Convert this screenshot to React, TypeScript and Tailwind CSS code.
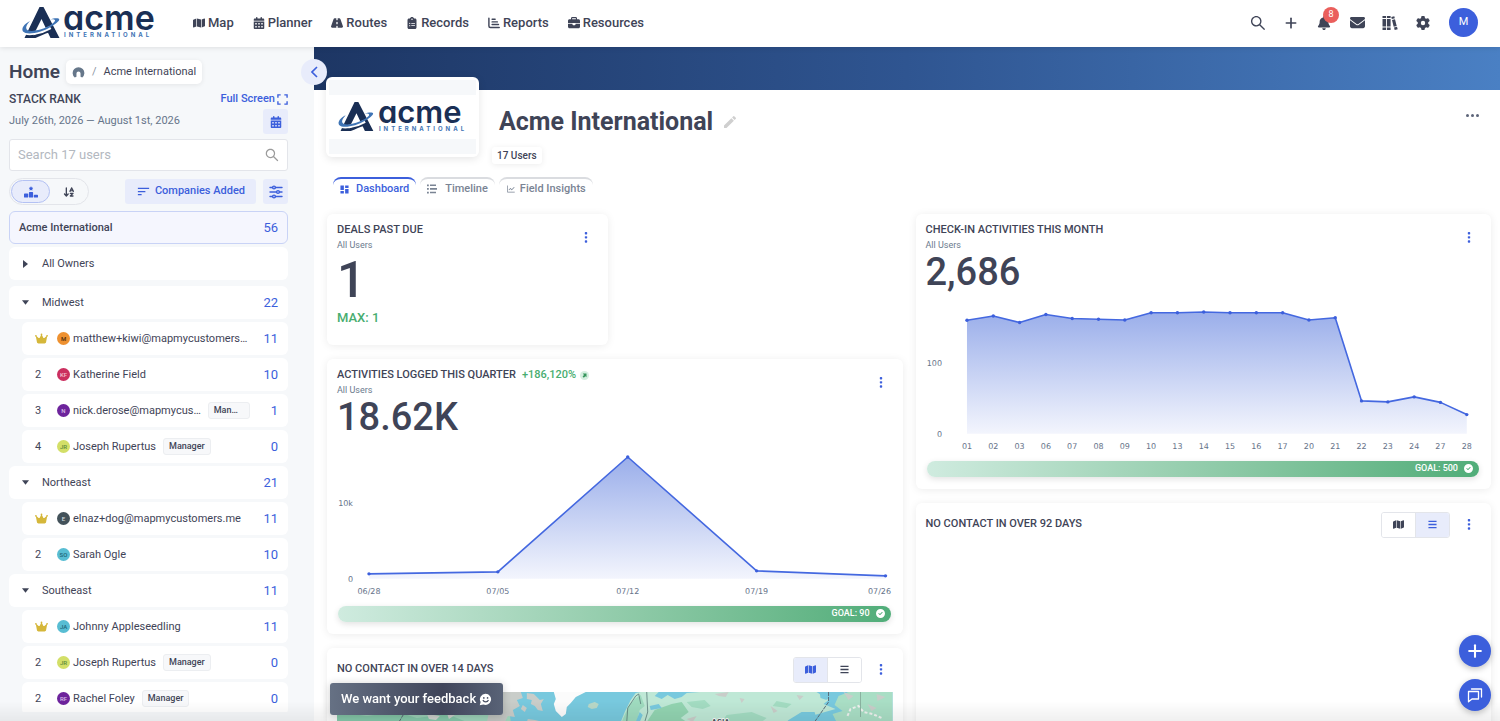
import type { ReactNode } from 'react'
import {
  FaArrowDownAZ,
  FaBell,
  FaBriefcase,
  FaCalendarDays,
  FaChartBar,
  FaCircleCheck,
  FaClipboardList,
  FaCrown,
  FaEnvelope,
  FaGear,
  FaMap,
  FaRankingStar,
  FaRoad,
} from 'react-icons/fa6'
import { AiOutlineLineChart, AiOutlineSearch } from 'react-icons/ai'
import { LuPlus } from 'react-icons/lu'
import { MdEdit, MdSort } from 'react-icons/md'

interface Member {
  rank: number
  name: string
  initials: string
  avatar: string
  count: number
  role?: string
}

interface Team {
  name: string
  count: number
  members: Member[]
}

interface Point {
  x: number
  y: number
  label: string
}

const navItems = [
  { label: 'Map', icon: <FaMap /> },
  { label: 'Planner', icon: <FaCalendarDays /> },
  { label: 'Routes', icon: <FaRoad /> },
  { label: 'Records', icon: <FaClipboardList /> },
  { label: 'Reports', icon: <ReportsIcon /> },
  { label: 'Resources', icon: <FaBriefcase /> },
]

const teams: Team[] = [
  {
    name: 'Midwest',
    count: 22,
    members: [
      { rank: 1, name: 'matthew+kiwi@mapmycustomers…', initials: 'M', avatar: 'bg-[#ee9130] text-[#4a2c0c]', count: 11 },
      { rank: 2, name: 'Katherine Field', initials: 'KF', avatar: 'bg-[#cb2f5f] text-[#f3c3d1]', count: 10 },
      { rank: 3, name: 'nick.derose@mapmycus…', initials: 'N', avatar: 'bg-[#6d249c] text-[#d9bfe9]', count: 1, role: 'Man…' },
      { rank: 4, name: 'Joseph Rupertus', initials: 'JR', avatar: 'bg-[#d3df68] text-[#5d8a3c]', count: 0, role: 'Manager' },
    ],
  },
  {
    name: 'Northeast',
    count: 21,
    members: [
      { rank: 1, name: 'elnaz+dog@mapmycustomers.me', initials: 'E', avatar: 'bg-[#43525a] text-[#d5dcdf]', count: 11 },
      { rank: 2, name: 'Sarah Ogle', initials: 'SO', avatar: 'bg-[#58bdd3] text-[#1f6678]', count: 10 },
    ],
  },
  {
    name: 'Southeast',
    count: 11,
    members: [
      { rank: 1, name: 'Johnny Appleseedling', initials: 'JA', avatar: 'bg-[#58bdd3] text-[#1f6678]', count: 11 },
      { rank: 2, name: 'Joseph Rupertus', initials: 'JR', avatar: 'bg-[#d3df68] text-[#5d8a3c]', count: 0, role: 'Manager' },
      { rank: 2, name: 'Rachel Foley', initials: 'RF', avatar: 'bg-[#6d249c] text-[#d9bfe9]', count: 0, role: 'Manager' },
    ],
  },
]

const quarterPoints: Point[] = [
  { x: 32, y: 137, label: '06/28' },
  { x: 161, y: 135, label: '07/05' },
  { x: 291, y: 20, label: '07/12' },
  { x: 420, y: 134, label: '07/19' },
  { x: 549, y: 139, label: '07/26' },
]

const monthDays = ['01', '02', '03', '06', '07', '08', '09', '10', '13', '14', '15', '16', '17', '20', '21', '22', '23', '24', '27', '28']
const monthHeights = [28.3, 24, 30.6, 22.5, 26.5, 27.3, 28, 20.7, 20.7, 20, 20.7, 20.7, 20.7, 28, 25.8, 109, 110, 105, 110.5, 122.7]
const monthPoints: Point[] = monthDays.map((label, i) => ({ label, x: 41 + i * 26.33, y: monthHeights[i] }))

function ReportsIcon() {
  return (
    <svg viewBox="0 0 16 16" fill="none" stroke="currentColor" strokeWidth="1.900" strokeLinecap="round" strokeLinejoin="round" aria-hidden="true">
      <path d="M1.200 1.500v10.500a2 2 0 0 0 2 2H15M5.500 3h4M5.500 6.500h7M5.500 10h8.500" />
    </svg>
  )
}

function LogoMark({ className }: { className: string }) {
  return (
    <svg viewBox="0 0 38 32" className={className} aria-hidden="true">
      <path d="M17.500 0H21.500L37.500 31H28.500L19.500 12 10 31H2.500Z" fill="#1a2f55" />
      <path d="M9 29C15 27 20 24.500 24 21L27 25.500C23 26.500 18 29 13.500 31H8Z" fill="#1a2f55" />
      <path d="M8 14C2 17-1 21.500 1.200 24.500 4.500 28.500 19 26 28.500 20.500" fill="none" stroke="#fff" strokeWidth="3.500" />
      <path d="M8 14C2 17-1 21.500 1 24.500 4.500 28.500 19 26 28.500 20 35 16 39 12.500 36.500 11.500 34.500 10.800 31 11.500 28 12.300 33 12 34.500 13 31.500 15.800 27 19.800 18 23.500 10 24 4 24.200 1.500 21 8 14Z" fill="#3f74b5" />
    </svg>
  )
}

function Logo({ small }: { small?: boolean }) {
  return (
    <span className={small ? 'flex items-center gap-1' : 'flex items-center gap-[3px]'}>
      <LogoMark className={small ? 'h-[30px] w-[36px]' : 'h-[32px] w-[38px]'} />
      <span className="flex flex-col font-['Inter']">
        <span
          className={
            small
              ? "text-[31px] leading-[24px] font-semibold text-[#1a2f55] [font-feature-settings:'cv11']"
              : "text-[34px] leading-[25px] font-semibold text-[#1a2f55] [font-feature-settings:'cv11']"
          }
        >
          acme
        </span>
        <span className="pl-px text-[6px] leading-[10px] font-bold tracking-[3px] text-[#3f74b5]">INTERNATIONAL</span>
      </span>
    </span>
  )
}

function BooksIcon() {
  return (
    <svg viewBox="0 0 16 16" className="size-4" fill="currentColor" aria-hidden="true">
      <path d="M.5 1h3.600v2H.500zM.500 4h3.600v7.500H.500zM.500 12.500h3.600v2.500H.500zM5 1h3.600v2H5zM5 4h3.600v7.500H5zM5 12.500h3.600v2.500H5z" />
      <path d="m9.300 2 3-.8.500 2-3 .8zM10 5l3-.8 1.700 6.700-3 .8zM12 12.600l3-.8.700 2.400-3 .8z" />
    </svg>
  )
}

function TuneIcon() {
  return (
    <svg viewBox="0 0 14 14" className="size-[14px]" fill="none" stroke="currentColor" strokeWidth="1.400" strokeLinecap="round" aria-hidden="true">
      <path d="M1 2.500h2.500M6.500 2.500H13M1 7h6.500M10.500 7H13M1 11.500h2.500M6.500 11.500H13" />
      <circle cx="5" cy="2.500" r="1.400" />
      <circle cx="9" cy="7" r="1.400" />
      <circle cx="5" cy="11.500" r="1.400" />
    </svg>
  )
}

function DashboardIcon() {
  return (
    <svg viewBox="0 0 10 10" className="size-[9px]" fill="currentColor" aria-hidden="true">
      <path d="M.5.5h3.800v5H.500zM.500 6.800h3.800v2.700H.500zM5.700.500h3.800v2.700H5.700zM5.700 4.500h3.800v5H5.700z" />
    </svg>
  )
}

function TimelineIcon() {
  return (
    <svg viewBox="0 0 10 10" className="size-[10px]" fill="currentColor" aria-hidden="true">
      <path d="M0 .5h1.800v1.700H0zM0 4.100h1.800v1.700H0zM0 7.700h1.800v1.700H0zM3 .5h6v1.600H3zM3 4.100h7v1.600H3zM3 7.700h6v1.600H3z" />
    </svg>
  )
}

function SmileChatIcon() {
  return (
    <svg viewBox="0 0 14 14" className="size-[13px]" aria-hidden="true">
      <path d="M7.200.800a6 6 0 1 1-2.600 11.500L.800 13.200l1-3.400A6 6 0 0 1 7.200.800Z" fill="#fff" />
      <circle cx="5.200" cy="5.300" r=".9" fill="#4a5064" />
      <circle cx="9.200" cy="5.300" r=".9" fill="#4a5064" />
      <path d="M4.200 7.600a3.200 3 0 0 0 6 0" fill="none" stroke="#4a5064" strokeWidth="1.200" />
    </svg>
  )
}

function ChatIcon() {
  return (
    <svg viewBox="0 0 16 16" className="size-4" fill="none" stroke="currentColor" strokeWidth="1.300" strokeLinejoin="round" aria-hidden="true">
      <path d="M1.500 4.500h10v7.500H5l-3.500 2.800Z" />
      <path d="M4.500 2h10v8" strokeLinecap="round" />
    </svg>
  )
}

function KebabIcon() {
  return (
    <svg viewBox="0 0 4 12" className="h-[11px] w-1" fill="currentColor" aria-hidden="true">
      <rect x=".7" y="0" width="2.600" height="2.600" rx=".8" />
      <rect x=".7" y="4.500" width="2.600" height="2.600" rx=".8" />
      <rect x=".7" y="9" width="2.600" height="2.600" rx=".8" />
    </svg>
  )
}

function LinesIcon() {
  return (
    <svg viewBox="0 0 10 10" className="size-[9px]" stroke="currentColor" strokeWidth="1.500" aria-hidden="true">
      <path d="M.5 1.500h9M.5 5h9M.5 8.500h9" />
    </svg>
  )
}

function KebabButton() {
  return (
    <button type="button" aria-label="Card options" className="flex size-6 shrink-0 items-center justify-center text-[#3c5fdc]">
      <KebabIcon />
    </button>
  )
}

function Card({ children, className = '' }: { children: ReactNode; className?: string }) {
  return (
    <section className={`rounded-md bg-white px-[10px] pt-[9px] shadow-[0_1px_8px_rgba(0,0,0,0.08)] ${className}`}>
      {children}
    </section>
  )
}

function CardTitle({ title, extra }: { title: string; extra?: ReactNode }) {
  return (
    <div className="flex items-start justify-between">
      <div>
        <div className="flex items-center gap-[6px]">
          <h2 className="text-[11px] leading-[14px] font-medium">{title}</h2>
          {extra}
        </div>
        <p className="text-[9px] leading-4 text-[#6b7a8d]">All Users</p>
      </div>
      <div className="pt-[2px]">
        <KebabButton />
      </div>
    </div>
  )
}

function AreaChart({ id, points, tick, tickY }: { id: string; points: Point[]; tick: string; tickY: number }) {
  const line = points.map((p) => `${p.x},${p.y}`).join(' ')
  const first = points[0]
  const last = points[points.length - 1]

  return (
    <svg viewBox="0 0 556 162" className="mt-px block w-full font-['DejaVu_Sans']" role="img" aria-label={id}>
      <defs>
        <linearGradient id={id} x1="0" y1="0" x2="0" y2="1">
          <stop offset="0" stopColor="#9aaeea" />
          <stop offset="1" stopColor="#f3f5fd" />
        </linearGradient>
      </defs>
      <polygon points={`${first.x},142 ${line} ${last.x},142`} fill={`url(#${id})`} />
      <polyline points={line} fill="none" stroke="#4468e0" strokeWidth="1.600" strokeLinejoin="round" />
      {points.map((p) => (
        <circle key={p.label} cx={p.x} cy={p.y} r="1.700" fill="#3c5fdc" />
      ))}
      <g fontSize="8" fill="#66738a">
        <text x="16" y={tickY} textAnchor="end">{tick}</text>
        <text x="16" y="145" textAnchor="end">0</text>
        {points.map((p) => (
          <text key={p.label} x={Math.min(p.x, 543)} y="157" textAnchor="middle">{p.label}</text>
        ))}
      </g>
    </svg>
  )
}

function GoalBar({ goal }: { goal: number }) {
  return (
    <div className="mt-[7px] mr-[2px] mb-3 ml-px flex h-4 items-center justify-end gap-[6px] rounded-full bg-linear-to-r from-[#cfebdf] to-[#50ad79] px-[6px] text-[9px] font-medium text-white shadow-[0_2px_6px_rgba(0,0,0,0.12)]">
      GOAL: {goal}
      <FaCircleCheck className="size-[9px]" />
    </div>
  )
}

function ViewSwitch({ active }: { active: 'map' | 'list' }) {
  const on = 'bg-[#e8ecfb] text-[#3c5fdc]'
  const off = 'bg-white text-[#3f4457]'
  return (
    <div className="flex h-[26px] w-[69px] overflow-hidden rounded-[3px] border border-[#e3e5ea]">
      <button type="button" aria-label="Map view" className={`flex flex-1 items-center justify-center text-[11px] ${active === 'map' ? on : off}`}>
        <FaMap />
      </button>
      <button type="button" aria-label="List view" className={`flex flex-1 items-center justify-center border-l border-[#e3e5ea] ${active === 'list' ? on : off}`}>
        <LinesIcon />
      </button>
    </div>
  )
}

function ContactHeader({ title, active }: { title: string; active: 'map' | 'list' }) {
  return (
    <div className="flex h-[26px] items-center">
      <h2 className="flex-1 pb-[2px] text-[11px] leading-[14px] font-medium">{title}</h2>
      <ViewSwitch active={active} />
      <div className="ml-[7px]">
        <KebabButton />
      </div>
    </div>
  )
}

function WorldMap() {
  return (
    <svg viewBox="0 0 556 160" className="block w-full" role="img" aria-label="Map">
      <rect width="556" height="160" fill="#78c9de" />
      <path d="M0 0H182L176 5 180 12 172 17 174 30 160 60 120 110H60L20 60H0Z" fill="#a5dcc2" />
      <path d="M163 0H184L186 6 180 8 183 14 176 18 178 25 171 24 168 30H150L155 8Z" fill="#c9cdc9" />
      <path d="M190 1 197 2 203 8 207 7 204 12 206 19 201 18 198 14 194 12 195 8 190 7ZM191 27 198 28 206 30H190Z" fill="#c9cdc9" />
      <path d="M186 13 190 16 188 20 184 17Z" fill="#c9cdc9" />
      <path d="M0 20 30 24 60 20 80 26 110 22 130 30H0Z" fill="#8bcfb0" />
      <path d="M90 22 103 24 99 28 92 27ZM110 21 118 23 112 27Z" fill="#d7dbd6" />
      <path d="M217 0H249L239 5 234 11 230 15 229 22 225 25 219 19 217 12 219 7Z" fill="#fbfbfb" />
      <path d="M252 12 258 10 262 12 260 16 255 17 251 15Z" fill="#b9d8c7" />
      <path d="M284 30 288 20 294 8 299 1 304 0H322L318 4 325 7 331 3 338 7 345 5 350 1 363 0H480L492 8 487 12 499 17 478 23 470 30 465 80 440 120H300L290 60Z" fill="#bfe8d6" />
      <path d="M287 25 292 14 298 7 304 3 308 14 303 18 300 30H285Z" fill="#9fdbbf" />
      <path d="M310 30 318 18 335 12 345 10 352 20 344 26 350 30Z" fill="#92d4b1" />
      <path d="M350 10 368 8 374 14 366 17 355 15ZM390 23 415 20 430 26 425 30H385ZM440 9 455 12 450 16 436 14Z" fill="#a3dcc2" />
      <path d="M299 30 303 20 306 23 303 30ZM313 14 322 12 325 16 314 18Z" fill="#78c9de" />
      <path d="M378 2 392 0 389 5 382 4ZM434 14 441 19 437 21ZM403 6 408 7 405 11ZM460 3 467 4 463 8ZM350 27 360 24 356 30Z" fill="#c9cdc9" />
      <path d="M483 0 492 2 490 8 484 6ZM452 28 465 20 478 20 481 30H450Z" fill="#78c9de" />
      <path d="M502 4 512 0H556V80L540 100 530 60 525 30H500L496 22 506 19 498 13Z" fill="#a9dec5" />
      <path d="M507 0 517 4 512 8ZM540 2 549 5 541 9ZM531 12 540 16 535 19Z" fill="#c9cdc9" />
      <path d="M511 24 514 17 522 14 527 20 536 22 545 26" fill="none" stroke="#eef1ee" strokeWidth="2" strokeDasharray="3 2" />
      <path d="M290 30 291 16 299 4 302 2 304 12M310 0 311 20 308 30" fill="none" stroke="#5b7a78" strokeWidth=".8" />
      <path d="M492 0V10L478 30M62 30 68 20" fill="none" stroke="#5a6c78" strokeWidth="1" strokeDasharray="4 1" />
      <path d="M524 0V25" stroke="#83a797" strokeWidth=".8" />
      <text x="384" y="32" textAnchor="middle" fontSize="8" fontWeight="700" fill="#4a545c" stroke="#fff" strokeWidth="1.500" paintOrder="stroke">ASIA</text>
    </svg>
  )
}

function MemberRow({ member }: { member: Member }) {
  return (
    <li className="ml-[13px] flex h-[33px] items-center rounded-md bg-white pr-[10px] pl-[13px]">
      <span className="w-[22px] shrink-0 text-[11px] leading-[18px]">
        {member.rank === 1 ? <FaCrown className="size-[13px] text-[#d5b73a]" aria-label="1" /> : member.rank}
      </span>
      <span className={`flex size-[13px] shrink-0 items-center justify-center rounded-full text-[6px] font-medium ${member.avatar}`}>
        {member.initials}
      </span>
      <a href="#member" className="ml-[3px] text-[11px] leading-[18px] whitespace-nowrap">{member.name}</a>
      {member.role && (
        <span className="ml-[7px] min-w-[42px] rounded-[3px] border border-[#eceef1] bg-[#f7f8fa] px-[5px] text-[9px] leading-[15px] font-medium">
          {member.role}
        </span>
      )}
      <span className="ml-auto shrink-0 text-right text-[13px] text-[#3c5fdc]">{member.count}</span>
    </li>
  )
}

function Sidebar() {
  return (
    <aside className="relative flex w-[314px] shrink-0 flex-col bg-[#f6f8fa] pt-[13px] pr-[26px] pb-[9px] pl-[9px]">
      <div className="flex h-6 items-center gap-[6px]">
        <h1 className="text-[19px] font-semibold">Home</h1>
        <nav aria-label="Breadcrumb" className="flex h-6 items-center gap-[7px] rounded-[5px] bg-white px-[6px] text-[11px] shadow-[0_1px_5px_rgba(0,0,0,0.08)]">
          <a href="#home" aria-label="Home">
            <svg viewBox="0 0 14 14" className="size-[13px]" aria-hidden="true">
              <path d="M3 12.500A6.300 6.300 0 1 1 11 12.500L9.200 11.500V8a2.200 2.200 0 0 0-4.400 0v3.500Z" fill="#66778a" />
            </svg>
          </a>
          <span className="text-[#8a94a3]">/</span>
          <a href="#acme">Acme International</a>
        </nav>
      </div>

      <div className="mt-[7px] flex h-4 items-center justify-between">
        <h2 className="text-xs font-medium">STACK RANK</h2>
        <button type="button" className="flex items-center gap-[2px] text-[11px] font-medium text-[#3c5fdc]">
          Full Screen
          <svg viewBox="0 0 12 12" className="size-[11px]" fill="none" stroke="currentColor" strokeWidth="1.500" aria-hidden="true">
            <path d="M1 4V1h3M8 1h3v3M11 8v3H8M4 11H1V8" />
          </svg>
        </button>
      </div>

      <div className="mt-[2px] flex h-[25px] items-center justify-between">
        <span className="text-[11px] text-[#66758a]">July 26th, 2026 — August 1st, 2026</span>
        <button type="button" aria-label="Pick dates" className="flex size-[25px] items-center justify-center rounded-[3px] bg-[#e8ecfb] text-xs text-[#3c5fdc]">
          <FaCalendarDays />
        </button>
      </div>

      <label className="mt-[5px] flex h-8 shrink-0 items-center rounded-[3px] border border-[#e3e5ea] bg-white px-[7px]">
        <input type="search" aria-label="Search users" placeholder="Search 17 users" className="min-w-0 flex-1 pl-px text-[13px] outline-none placeholder:text-[#b3b8bf]" />
        <AiOutlineSearch className="size-4 text-[#9b9b9b]" />
      </label>

      <div className="mt-[7px] flex h-[27px] shrink-0 items-center">
        <div className="flex h-[27px] w-20 items-center rounded-full border border-[#e3e5ea] p-px">
          <button type="button" aria-label="Rank order" className="flex h-full flex-1 items-center justify-center rounded-full border border-[#b3c1f3] bg-[#e8ecfb] text-sm text-[#3c5fdc]">
            <FaRankingStar />
          </button>
          <button type="button" aria-label="Alphabetical order" className="flex h-full flex-1 items-center justify-center text-xs">
            <FaArrowDownAZ />
          </button>
        </div>
        <button type="button" className="ml-auto flex h-[25px] w-[131px] items-center justify-center gap-1 rounded-[3px] bg-[#e8ecfb] text-[11px] font-medium text-[#3c5fdc]">
          <MdSort className="size-[15px]" />
          Companies Added
        </button>
        <button type="button" aria-label="Filters" className="ml-[7px] flex size-[25px] items-center justify-center rounded-[3px] bg-[#e8ecfb] text-[#3c5fdc]">
          <TuneIcon />
        </button>
      </div>

      <ul className="mt-[6px] flex min-h-0 flex-1 flex-col gap-[3px] overflow-hidden *:shrink-0">
        <li className="flex h-[33px] items-center justify-between rounded-md border border-[#c9d3f6] bg-[#f5f6fe] px-[9px] text-[11px] leading-[18px] font-medium">
          Acme International
          <span className="text-[13px] font-normal text-[#3c5fdc]">56</span>
        </li>
        <li className="mb-[3px] flex h-[33px] items-center rounded-md bg-white pl-[14px] text-[11px] leading-[18px]">
          <button type="button" className="flex items-center gap-[14px]">
            <svg viewBox="0 0 5 8" className="h-2 w-[5px]" fill="currentColor" aria-hidden="true"><path d="M0 0 5 4 0 8Z" /></svg>
            All Owners
          </button>
        </li>
        {teams.map((team) => (
          <li key={team.name}>
            <div className="mb-[3px] flex h-[33px] items-center justify-between rounded-md bg-white pr-[10px] pl-[13px] text-[11px] leading-[18px]">
              <button type="button" className="flex items-center gap-[13px]">
                <svg viewBox="0 0 8 5" className="h-[5px] w-[7px]" fill="currentColor" aria-hidden="true"><path d="M0 0H8L4 5Z" /></svg>
                {team.name}
              </button>
              <span className="text-[13px] text-[#3c5fdc]">{team.count}</span>
            </div>
            <ul className="flex flex-col gap-[3px]">
              {team.members.map((member) => (
                <MemberRow key={member.name} member={member} />
              ))}
            </ul>
          </li>
        ))}
      </ul>

      <button type="button" aria-label="Collapse sidebar" className="absolute top-3 -right-[13px] z-10 flex size-[26px] items-center justify-center rounded-full bg-[#e8ecfb] text-[#3c5fdc]">
        <svg viewBox="0 0 7 12" className="h-3 w-[7px]" fill="none" stroke="currentColor" strokeWidth="1.600" aria-hidden="true"><path d="M6 1 1 6l5 5" /></svg>
      </button>
    </aside>
  )
}

function Header() {
  return (
    <header className="z-20 flex h-[47px] shrink-0 items-center bg-white px-[22px] pb-[2px] shadow-[0_1px_5px_rgba(0,0,0,0.1)]">
      <a href="#home" className="w-[171px] shrink-0">
        <Logo />
      </a>
      <nav className="flex items-center gap-[19px] text-[13px] font-medium">
        {navItems.map((item) => (
          <a key={item.label} href="#nav" className="flex items-center gap-[3px] leading-4 [&>svg]:h-3 [&>svg]:w-auto">
            {item.icon}
            {item.label}
          </a>
        ))}
      </nav>
      <div className="ml-auto flex items-center gap-[17px] *:flex *:size-4 *:items-center *:justify-center">
        <button type="button" aria-label="Search"><AiOutlineSearch className="size-[18px] shrink-0" /></button>
        <button type="button" aria-label="Add"><LuPlus className="size-4" strokeWidth={2.5} /></button>
        <button type="button" aria-label="Notifications" className="relative">
          <FaBell className="size-[14px]" />
          <span className="absolute -top-2 -right-[7px] flex size-4 items-center justify-center rounded-full bg-[#ea5f5c] text-[9px] text-white">8</span>
        </button>
        <button type="button" aria-label="Messages"><FaEnvelope className="size-[15px]" /></button>
        <button type="button" aria-label="Library"><BooksIcon /></button>
        <button type="button" aria-label="Settings"><FaGear className="size-[14px]" /></button>
      </div>
      <button type="button" aria-label="Account" className="ml-[18px] flex size-[29px] items-center justify-center rounded-full bg-[#3c5fdc] text-[11px] text-white">
        M
      </button>
    </header>
  )
}

export default function App() {
  const tab = 'flex h-[22px] items-center rounded-t-lg border-t-2 px-[7px] text-[11px] font-medium'

  return (
    <div className="flex h-screen flex-col overflow-hidden bg-white font-['Roboto',sans-serif] text-[#3f4457]">
      <Header />
      <div className="flex min-h-0 flex-1">
        <Sidebar />
        <main className="min-w-0 flex-1 overflow-hidden">
          <div className="h-[43px] bg-linear-to-r from-[#1d3664] via-[#2f5591] to-[#4a80c4]" />
          <div className="-mt-[13px] flex h-[89px] items-start pr-[21px] pl-3">
            <div className="h-20 w-[153px] rounded-md bg-white p-[3px] shadow-[0_2px_8px_rgba(0,0,0,0.1)]">
              <div className="flex h-full items-center bg-[#f6f8fa]">
                <div className="flex h-[44px] w-full items-center justify-center bg-white">
                  <Logo small />
                </div>
              </div>
            </div>
            <div className="ml-[13px] pt-[30px]">
              <div className="flex items-center gap-[9px] pl-[7px]">
                <h1 className="text-[25px] leading-[30px] font-bold">Acme International</h1>
                <button type="button" aria-label="Edit name"><MdEdit className="size-4 text-[#cfcfcf]" /></button>
              </div>
              <span className="mt-[10px] inline-block rounded-[3px] bg-white px-[5px] text-[10px] leading-[17px] font-medium shadow-[0_1px_6px_rgba(0,0,0,0.08)]">17 Users</span>
            </div>
            <button type="button" aria-label="More" className="mt-[36px] ml-auto flex h-1 items-center gap-[2px] *:size-[3px] *:rounded-full *:bg-[#5d6579]">
              <span /><span /><span />
            </button>
          </div>

          <div className="mt-[11px] flex gap-1 pl-[19px]" role="tablist">
            <button type="button" role="tab" aria-selected="true" className={`${tab} gap-[7px] border-[#3c5fdc] text-[#3c5fdc]`}><DashboardIcon />Dashboard</button>
            <button type="button" role="tab" className={`${tab} gap-2 border-[#dadce0] text-[#7a8494]`}><TimelineIcon />Timeline</button>
            <button type="button" role="tab" className={`${tab} gap-1 border-[#dadce0] text-[#7a8494]`}><AiOutlineLineChart className="size-[10px]" />Field Insights</button>
          </div>

          <div className="mt-[15px] grid grid-cols-2 items-start gap-[13px] pr-[9px] pl-[13px]">
            <div className="flex flex-col gap-[14px]">
              <div className="grid grid-cols-2 gap-[13px]">
                <Card className="pb-[19px]">
                  <CardTitle title="DEALS PAST DUE" />
                  <p className="text-[50px] leading-[54px] font-medium">1</p>
                  <p className="pt-[2px] text-[13px] leading-[17px] font-medium text-[#48ad70]">MAX: 1</p>
                </Card>
              </div>
              <Card>
                <CardTitle
                  title="ACTIVITIES LOGGED THIS QUARTER"
                  extra={
                    <span className="flex items-center gap-1 text-[11px] leading-[14px] font-medium text-[#48ad70]">
                      +186,120%
                      <svg viewBox="0 0 9 9" className="size-[9px]" aria-hidden="true">
                        <circle cx="4.500" cy="4.500" r="4.500" fill="#d5efe0" />
                        <path d="M2.800 2.500H6.500V6.200L5.400 5.300 3.800 6.800 2.600 5.600 4 4Z" fill="#36965c" />
                      </svg>
                    </span>
                  }
                />
                <p className="text-[38px] leading-[38px] font-medium">18.62K</p>
                <AreaChart id="activities-logged" points={quarterPoints} tick="10k" tickY={69} />
                <GoalBar goal={90} />
              </Card>
              <Card className="pb-[10px]">
                <ContactHeader title="NO CONTACT IN OVER 14 DAYS" active="map" />
                <div className="mt-[9px]">
                  <WorldMap />
                </div>
              </Card>
            </div>
            <div className="flex flex-col gap-[14px]">
              <Card>
                <CardTitle title="CHECK-IN ACTIVITIES THIS MONTH" />
                <p className="text-[38px] leading-[38px] font-medium">2,686</p>
                <AreaChart id="check-ins" points={monthPoints} tick="100" tickY={74} />
                <GoalBar goal={500} />
              </Card>
              <Card className="min-h-[300px]">
                <ContactHeader title="NO CONTACT IN OVER 92 DAYS" active="list" />
              </Card>
            </div>
          </div>
        </main>
      </div>

      <div className="pointer-events-none fixed inset-x-0 bottom-0 h-5 bg-linear-to-b from-transparent to-black/6" />
      <button type="button" className="fixed bottom-[6px] left-[330px] flex h-8 items-center gap-[3px] rounded-[3px] bg-linear-to-r from-[#667184] via-[#40455a] via-65% to-[#596377] px-[11px] text-[13px] font-medium text-white shadow-[0_1px_8px_rgba(0,0,0,0.2)]">
        We want your feedback
        <SmileChatIcon />
      </button>
      <div className="fixed right-[9px] bottom-[10px] flex flex-col items-center gap-3 text-white *:flex *:size-8 *:items-center *:justify-center *:rounded-full *:bg-[#3c5fdc] *:shadow-[0_2px_6px_rgba(0,0,0,0.25)]">
        <button type="button" aria-label="Create"><LuPlus className="size-5" strokeWidth={2.5} /></button>
        <button type="button" aria-label="Chat"><ChatIcon /></button>
      </div>
    </div>
  )
}
